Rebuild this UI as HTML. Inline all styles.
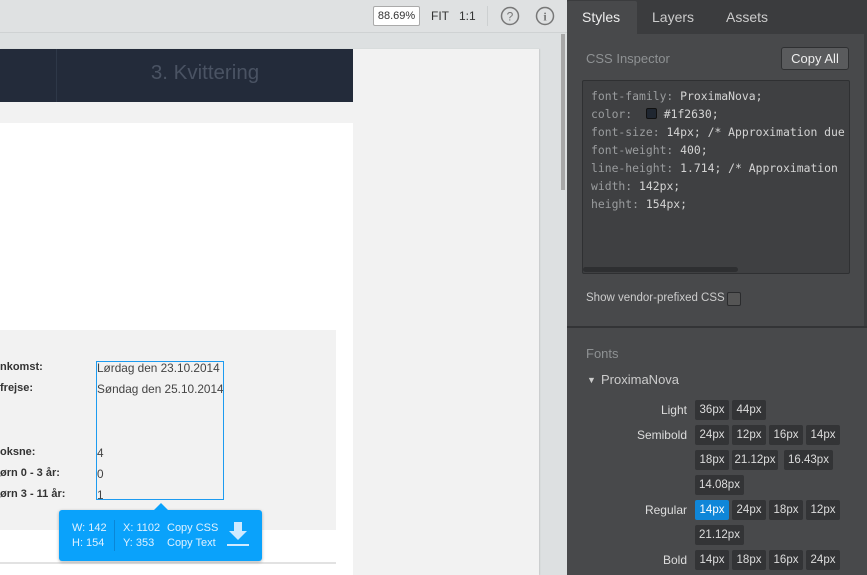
<!DOCTYPE html>
<html><head><meta charset="utf-8"><style>
*{margin:0;padding:0;box-sizing:border-box}
body{width:867px;height:575px;overflow:hidden;position:relative;background:#dde0e1;font-family:"Liberation Sans","DejaVu Sans",sans-serif}
.a{position:absolute}
.tb{left:0;top:0;width:567px;height:33px;background:#dfe1e2;border-bottom:1px solid #cfd2d3}
.lbl{font-weight:bold;font-size:11px;color:#333}
.val{font-size:11.8px;color:#444}
.tag{position:absolute;height:20px;background:#333436;color:#ddd;font-size:11.5px;line-height:20px;text-align:center;border-radius:2px}
.fl{position:absolute;width:120px;text-align:right;font-size:12px;color:#ddd;left:567px}
.mono{font-family:"DejaVu Sans Mono","Liberation Mono",monospace;font-size:11.4px;color:#9a9c9e}
.mono b{font-weight:normal;color:#d4d4d4}
</style></head><body>
<div class="a tb"></div>
<div class="a" style="left:373px;top:6px;width:47px;height:20px;background:#fff;border:1px solid #aaa;border-radius:2px;font-size:11px;line-height:18px;text-align:center;color:#333">88.69%</div>
<div class="a" style="left:431px;top:9px;font-size:12px;color:#333">FIT</div>
<div class="a" style="left:459px;top:9px;font-size:12px;color:#333">1:1</div>
<div class="a" style="left:487px;top:6px;width:1px;height:20px;background:#cdd0d1"></div>
<svg class="a" style="left:499px;top:5px" width="22" height="22"><circle cx="11" cy="11" r="8.5" fill="none" stroke="#777" stroke-width="1.5"/><text x="11" y="15.5" font-size="12" text-anchor="middle" fill="#777" font-family="Liberation Sans">?</text></svg>
<svg class="a" style="left:534px;top:5px" width="22" height="22"><circle cx="11" cy="11" r="8.5" fill="none" stroke="#777" stroke-width="1.5"/><text x="11" y="15.5" font-size="12" text-anchor="middle" fill="#777" font-family="Liberation Serif" font-weight="bold">i</text></svg>

<div class="a" style="left:0;top:49px;width:539px;height:526px;background:#f2f2f2;box-shadow:1px 0 1px #c8cacb"></div>
<div class="a" style="left:0;top:49px;width:353px;height:53px;background:#232b3a"></div>
<div class="a" style="left:56px;top:49px;width:1px;height:53px;background:#2e3848"></div>
<div class="a" style="left:57px;top:61px;width:296px;text-align:center;font-size:20.5px;color:#4a5363">3. Kvittering</div>
<div class="a" style="left:0;top:123px;width:353px;height:452px;background:#fff"></div>
<div class="a" style="left:0;top:330px;width:336px;height:200px;background:#f2f2f2"></div>
<div class="a" style="left:0;top:562px;width:336px;height:2px;background:#e2e2e2"></div>
<div class="a lbl" style="left:0;top:361px">nkomst:</div>
<div class="a lbl" style="left:0;top:382px">frejse:</div>
<div class="a lbl" style="left:0;top:446px">oksne:</div>
<div class="a lbl" style="left:0;top:467px">ørn 0 - 3 år:</div>
<div class="a lbl" style="left:0;top:488px">ørn 3 - 11 år:</div>
<div class="a val" style="left:97px;top:361px">Lørdag den 23.10.2014</div>
<div class="a val" style="left:97px;top:382px">Søndag den 25.10.2014</div>
<div class="a val" style="left:97px;top:446px">4</div>
<div class="a val" style="left:97px;top:467px">0</div>
<div class="a val" style="left:97px;top:488px">1</div>
<div class="a" style="left:96px;top:361px;width:128px;height:139px;border:1px solid #1d9bf0"></div>
<div class="a" style="left:59px;top:510px;width:203px;height:51px;background:#0aa2fb;border-radius:3px;box-shadow:0 1px 3px rgba(0,0,0,.3)"></div>
<div class="a" style="left:153px;top:503px;width:0;height:0;border-left:8px solid transparent;border-right:8px solid transparent;border-bottom:8px solid #0aa2fb"></div>
<div class="a" style="left:114px;top:520px;width:1px;height:31px;background:#0a86d6"></div>
<div class="a" style="left:72px;top:521px;font-size:11px;color:#dff1ff;line-height:15px">W: 142<br>H: 154</div>
<div class="a" style="left:123px;top:521px;font-size:11px;color:#dff1ff;line-height:15px">X: 1102<br>Y: 353</div>
<div class="a" style="left:167px;top:521px;font-size:11px;color:#dff1ff;line-height:15px">Copy CSS<br>Copy Text</div>
<svg class="a" style="left:226px;top:522px" width="24" height="26"><path d="M8 0h8v9h5l-9 9-9-9h5z" fill="#cfeaff"/><rect x="1" y="22" width="22" height="2" fill="#cfeaff"/></svg>

<div class="a" style="left:561px;top:34px;width:4px;height:156px;background:#a8a8a8"></div>

<div class="a" style="left:567px;top:0;width:300px;height:575px;background:#48494b"></div>
<div class="a" style="left:567px;top:0;width:300px;height:34px;background:#3b3c3e"></div>
<div class="a" style="left:567px;top:1px;width:70px;height:33px;background:#48494b;border-radius:2px 2px 0 0"></div>
<div class="a" style="left:582px;top:9px;font-size:14px;color:#eee">Styles</div>
<div class="a" style="left:652px;top:9px;font-size:14px;color:#ccc">Layers</div>
<div class="a" style="left:726px;top:9px;font-size:14px;color:#ccc">Assets</div>
<div class="a" style="left:586px;top:51px;font-size:13px;color:#8e9193">CSS Inspector</div>
<div class="a" style="left:781px;top:47px;width:68px;height:23px;background:#5a5b5d;border:1px solid #2f3032;border-radius:3px;font-size:13px;color:#eee;text-align:center;line-height:21px">Copy All</div>
<div class="a" style="left:582px;top:80px;width:268px;height:194px;background:#3f4042;border:1px solid #2f3032;border-radius:2px;overflow:hidden">
<div class="a mono" style="left:8px;top:6px;line-height:18px;white-space:pre">font-family: <b>ProximaNova;</b>
color:  <span style="display:inline-block;width:11px;height:11px;background:#1f2630;border:1px solid #111;vertical-align:-1px;border-radius:2px"></span> <b>#1f2630;</b>
font-size: <b>14px; /* Approximation due</b>
font-weight: <b>400;</b>
line-height: <b>1.714; /* Approximation</b>
width: <b>142px;</b>
height: <b>154px;</b></div></div>
<div class="a" style="left:583px;top:267px;width:155px;height:5px;background:#2e2f31;border-radius:3px"></div>
<div class="a" style="left:586px;top:292px;font-size:11.5px;color:#ccc">Show vendor-prefixed CSS</div>
<div class="a" style="left:727px;top:292px;width:14px;height:14px;background:#555;border:1px solid #2a2b2d;border-radius:2px"></div>
<div class="a" style="left:567px;top:326px;width:300px;height:2px;background:#333436"></div>
<div class="a" style="left:586px;top:346px;font-size:13px;color:#8e9193">Fonts</div>
<div class="a" style="left:587px;top:375px;font-size:9px;color:#ccc">▼</div>
<div class="a" style="left:601px;top:372px;font-size:13px;color:#ccc">ProximaNova</div>
<div class="fl" style="top:403px">Light</div>
<div class="fl" style="top:428px">Semibold</div>
<div class="fl" style="top:503px">Regular</div>
<div class="fl" style="top:553px">Bold</div>
<div class="tag" style="left:695px;top:400px;width:34px">36px</div>
<div class="tag" style="left:732px;top:400px;width:34px">44px</div>
<div class="tag" style="left:695px;top:425px;width:34px">24px</div>
<div class="tag" style="left:732px;top:425px;width:34px">12px</div>
<div class="tag" style="left:769px;top:425px;width:34px">16px</div>
<div class="tag" style="left:806px;top:425px;width:34px">14px</div>
<div class="tag" style="left:695px;top:450px;width:34px">18px</div>
<div class="tag" style="left:732px;top:450px;width:46px">21.12px</div>
<div class="tag" style="left:784px;top:450px;width:49px">16.43px</div>
<div class="tag" style="left:695px;top:475px;width:49px">14.08px</div>
<div class="tag" style="left:695px;top:500px;width:34px;background:#0f86d8;color:#fff">14px</div>
<div class="tag" style="left:732px;top:500px;width:34px">24px</div>
<div class="tag" style="left:769px;top:500px;width:34px">18px</div>
<div class="tag" style="left:806px;top:500px;width:34px">12px</div>
<div class="tag" style="left:695px;top:525px;width:49px">21.12px</div>
<div class="tag" style="left:695px;top:550px;width:34px">14px</div>
<div class="tag" style="left:732px;top:550px;width:34px">18px</div>
<div class="tag" style="left:769px;top:550px;width:34px">16px</div>
<div class="tag" style="left:806px;top:550px;width:34px">24px</div>
<div class="a" style="left:864px;top:34px;width:3px;height:292px;background:#3b3c3e"></div>
</body></html>
